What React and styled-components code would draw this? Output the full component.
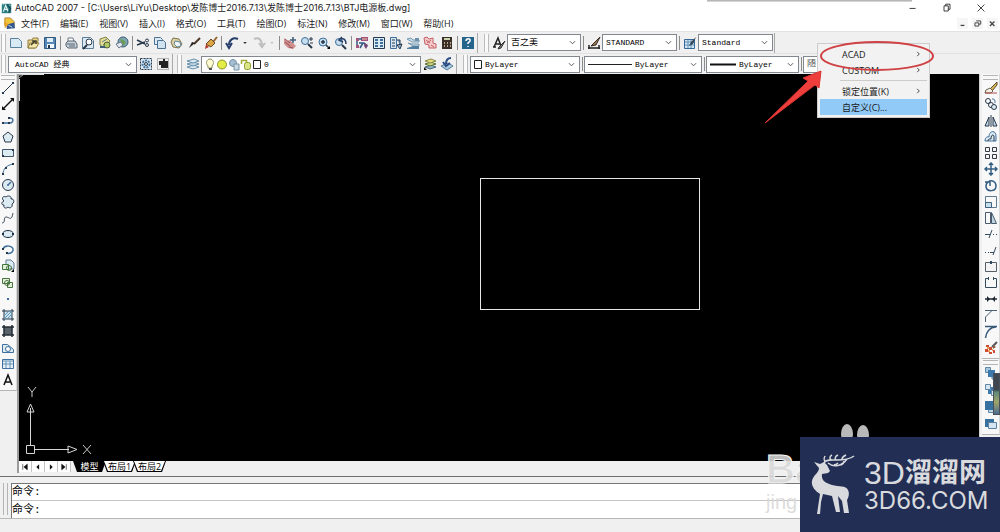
import React, { useState } from "react";
import styled, { createGlobalStyle } from "styled-components";

const GlobalStyle = createGlobalStyle`
  * {
    box-sizing: border-box;
  }
  body {
    margin: 0;
    background: #f0f0f0;
    font-family: "Open Sans", "Noto Sans CJK SC", sans-serif;
    font-size: 9px;
    color: #1a1a1a;
  }
  button,
  input,
  select {
    font: inherit;
    color: inherit;
    margin: 0;
    padding: 0;
    border: none;
    background: none;
  }
`;

const Window = styled.div`
  position: relative;
  display: flex;
  flex-direction: column;
  min-height: 100vh;
  overflow: hidden;
`;

const TitleBar = styled.header`
  display: flex;
  align-items: center;
  height: 16px;
  padding: 0 12px 0 1px;
  background: #fff;
`;

const Title = styled.h1`
  flex: 1;
  margin: 0 0 0 3px;
  font-family: Inter, "Noto Sans CJK SC", sans-serif;
  font-size: 9px;
  font-weight: 400;
  line-height: 16px;
  white-space: nowrap;
`;

const WindowButtons = styled.div`
  display: flex;
  gap: ${(props) => (props.small ? "4px" : "20px")};
`;

const WindowButton = styled.button`
  display: flex;
  align-items: center;
  justify-content: center;
  width: ${(props) => (props.small ? "11px" : "14px")};
  height: ${(props) => (props.small ? "11px" : "14px")};
  background: ${(props) => (props.small ? "#f6f6f6" : "none")};
`;

const MenuBar = styled.nav`
  display: flex;
  align-items: center;
  height: 15px;
  padding: 0 2px 0 3px;
  background: #fff;
`;

const Menus = styled.div`
  display: flex;
  flex: 1;
  gap: 11px;
  margin-left: 5px;
`;

const MenuButton = styled.button`
  line-height: 15px;
  white-space: nowrap;
`;

const ToolRow = styled.div`
  display: flex;
  align-items: center;
  height: ${(props) => props.height};
  border-top: 1px solid #e2e2e2;
`;

const Toolbar = styled.div`
  display: flex;
  align-items: center;
  height: 20px;
  padding-right: 1px;
  margin-right: ${(props) => props.after || "5px"};
  border-right: 1px solid #a8a8a8;
`;

const Grip = styled.div`
  width: 5px;
  height: 18px;
  margin: 0 ${(props) => props.gap || "2px"} 0 1px;
  border: solid #bcbcbc;
  border-width: 0 1px;
  background: #fafafa;
`;

const ToolButton = styled.button`
  display: flex;
  align-items: center;
  justify-content: center;
  width: ${(props) => (props.narrow ? "10px" : "17px")};
  height: ${(props) => (props.side ? "16px" : "18px")};
  flex: none;
`;

const Divider = styled.span`
  width: 4px;
  height: 14px;
  flex: none;
  background: linear-gradient(#8c8c8c, #8c8c8c) center / 1px 100% no-repeat;
`;

const ComboBox = styled.label`
  position: relative;
  display: flex;
  align-items: center;
  gap: 3px;
  width: ${(props) => props.width};
  height: 17px;
  padding: 0 3px;
  flex: none;
  background: #fff;
  border: 1px solid #828790;
`;

const ComboSelect = styled.select`
  flex: 1;
  min-width: 0;
  height: 15px;
  appearance: none;
  outline: none;
  font-family: "Liberation Mono", "Noto Sans CJK SC", monospace;
  font-size: ${(props) => (props.large ? "9px" : "8px")};
  color: #000;
  text-indent: ${(props) => props.indent || "0"};
`;

const Main = styled.main`
  display: flex;
  flex: 1;
`;

const SideDock = styled.aside`
  width: ${(props) => (props.right ? "21px" : "19px")};
  flex: none;
  padding-left: ${(props) => (props.right ? "2px" : "0")};
  border-left: ${(props) => (props.right ? "1px solid #d0d0d0" : "none")};
  border-right: ${(props) => (props.right ? "none" : "2px solid #9a9a9a")};
`;

const SideBar = styled.div`
  display: flex;
  flex-direction: column;
  height: ${(props) => props.height};
  background: #f8f8f9;
  border-bottom: 1px solid #b4b4b4;
  border-right: 1px solid #d8d8d8;
`;

const SideGrip = styled.div`
  height: 5px;
  flex: none;
  margin: 1px 1px 0;
  border: solid #b4b4b4;
  border-width: 1px 0;
`;

const SideTools = styled.div`
  display: flex;
  flex: 1;
  flex-direction: column;
  align-items: center;
  justify-content: space-between;
  padding-bottom: 2px;
`;

const Workspace = styled.section`
  display: flex;
  flex: 1;
  flex-direction: column;
  min-width: 0;
`;

const Drawing = styled.svg`
  display: block;
  flex: 1;
  width: 100%;
  min-height: 380px;
  background: #000;
`;

const TabRow = styled.div`
  display: flex;
  height: 12px;
`;

const TabNav = styled.button`
  display: flex;
  align-items: center;
  justify-content: center;
  width: 13px;
  height: 11px;
  background: #fdfdfd;
  border-right: 1px solid #c4c4c4;
`;

const Tabs = styled.div`
  display: flex;
  margin-left: 2px;
`;

const LayoutTab = styled.button`
  position: relative;
  width: 33px;
  height: 11px;
  margin-right: -3px;
  font-size: 9px;
  line-height: 11px;
  white-space: nowrap;
  color: ${(props) => (props.active ? "#fff" : "#000")};
  z-index: 0;

  &::before,
  &::after {
    content: "";
    position: absolute;
    z-index: -1;
    inset: 0;
    background: #000;
    clip-path: polygon(0 0, 100% 0, calc(100% - 4px) 100%, 4px 100%);
  }
  &::after {
    inset: 0 1px 1px;
    background: ${(props) => (props.active ? "#000" : "#fff")};
  }
`;

const CommandDock = styled.section`
  display: flex;
  margin-top: 3px;
  padding-top: 6px;
  border-top: 1px solid #6e6e6e;
  border-bottom: 1px solid #b8b8b8;
`;

const CommandGrip = styled.div`
  width: 5px;
  margin: 0 3px 3px;
  border: solid #b4b4b4;
  border-width: 0 1px;
`;

const CommandPane = styled.div`
  flex: 1;
  border: solid #777;
  border-width: 1px 0 0 1px;
  background: #fff;
  font-family: "Liberation Mono", "Noto Sans CJK SC", monospace;
  font-size: 11px;
  color: #000;
`;

const CommandLine = styled.div`
  display: flex;
  align-items: center;
  height: 17px;
  line-height: 12px;
  border-bottom: ${(props) => (props.divided ? "1px solid #c4c4c4" : "none")};
`;

const CommandInput = styled.input`
  flex: 1;
  outline: none;
`;

const StatusBar = styled.footer`
  height: 13px;
`;

const ContextMenu = styled.div`
  position: absolute;
  left: 817px;
  top: 43px;
  width: 113px;
  padding: 2px;
  background: #f2f2f2;
  border: 1px solid #ccc;
`;

const ContextItem = styled.button`
  display: flex;
  align-items: center;
  justify-content: space-between;
  width: 100%;
  height: 16px;
  padding: 0 6px 0 22px;
  background: ${(props) => (props.selected ? "#91c9f7" : "transparent")};
`;

const ContextRule = styled.hr`
  height: 1px;
  margin: 2px 0 2px 20px;
  border: none;
  background: #ccc;
`;

const Annotation = styled.svg`
  position: absolute;
  left: 760px;
  top: 36px;
  pointer-events: none;
`;

const BackWindowEdge = styled.div`
  position: absolute;
  left: 707px;
  top: 0;
  width: 205px;
  height: 2px;
  background: linear-gradient(#a8a8a8, #e4e4e4);
`;

const FloatingMeter = styled.div`
  position: absolute;
  right: 0;
  top: 373px;
  width: 7px;
  height: 42px;
  background: linear-gradient(#3e4650 40%, #5c8a78 45%, #a0a468 70%, #4d6d92);
  border: 1px solid #4a505a;
`;

const Watermark = styled.div`
  position: absolute;
  right: 180px;
  bottom: 18px;
  width: 54px;
  font-family: "Liberation Sans", sans-serif;
  color: rgba(216, 216, 216, 0.9);
`;

const WatermarkName = styled.div`
  font-size: 40px;
  font-weight: 700;
  line-height: 42px;
  -webkit-text-stroke: 1px #f4f4f4;
`;

const WatermarkSub = styled.div`
  font-size: 20px;
  line-height: 24px;
`;

const Paw = styled.svg`
  position: absolute;
  right: 128px;
  bottom: 90px;
`;

const Brand = styled.div`
  position: absolute;
  right: 0;
  bottom: 0;
  display: flex;
  align-items: center;
  gap: 7px;
  width: 200px;
  height: 95px;
  padding: 0 0 0 11px;
  background: #222e54;
  color: #d9dadd;
`;

const BrandName = styled.div`
  display: flex;
  align-items: center;
  height: 32px;
  font-family: Inter, "Noto Sans CJK SC", sans-serif;
  font-size: 27px;
  font-weight: 700;
  line-height: 32px;
  white-space: nowrap;
`;

const BrandPrefix = styled.span`
  font-family: "Liberation Sans", sans-serif;
  font-size: 32px;
  font-weight: 400;
`;

const BrandSite = styled.div`
  height: 24px;
  font-family: Inter, sans-serif;
  font-size: 24px;
  line-height: 24px;
`;

const ink = "#27384a";
const blue = "#3f6f9c";
const pale = "#c6deed";

const glyphs = {
  app: (
    <>
      <path d="M1 1h12v12H1z" fill="#2e7f84" />
      <path d="M3 11L6 3l3 8M5 8h4" stroke="#e5f5f2" strokeWidth="1.5" />
      <path d="M8 2l4 5-2 5" stroke="#134d55" strokeWidth="2" />
      <path d="M10 3h2M2 2h2" stroke="#b8d9d2" />
    </>
  ),
  doc: (
    <>
      <path d="M2 1h6l4 4v4H2z" fill="#f2c43c" stroke="#af842a" />
      <path d="M4 8l8-2 1 6-9 1z" fill="#31568d" />
      <path d="M1 4l5 4-4 4" fill="#e2a32b" />
      <path d="M6 9l4 2" stroke="#d9e5f2" />
    </>
  ),
  newFile: <path d="M1.500 2.500h8l3 3v6h-11z" fill="#d8ebf5" stroke="#58819c" />,
  open: (
    <>
      <path d="M2 4h4l1-2h5v3L9 12H2z" fill="#e8d68f" stroke="#8f7d3a" />
      <path d="M4 7h9l-3 5H2z" fill="#f5e7ab" stroke="#8f7d3a" />
      <path d="M5 9l4-4M6 5h4v3" stroke="#42402c" strokeWidth="1.500" />
    </>
  ),
  save: (
    <>
      <path d="M1.500 1.500h11v11h-11z" fill="#5588b8" stroke="#31587f" />
      <path d="M4 2h6v4H4z" fill="#e1edf5" />
      <path d="M4 8h7v4H4z" fill="#f4f8fa" />
      <path d="M6 9v3" stroke={ink} strokeWidth="2" />
    </>
  ),
  print: (
    <>
      <path d="M4 6V2h5l1 4" fill="#fff" stroke="#6b7785" />
      <path d="M2 7l2-2h7l2 3v4H4l-2-2z" fill="#c9d1db" stroke="#566474" />
      <path d="M3 8h8M5 10h6" stroke="#566474" />
    </>
  ),
  preview: (
    <>
      <path d="M1.500 1.500h8l3 3v8h-11z" fill="#dcebf3" stroke="#5d7e97" />
      <circle cx="8" cy="6" r="3" fill="#fff" stroke={ink} />
      <path d="M6 9l-4 4" stroke={ink} strokeWidth="2" />
    </>
  ),
  publish: (
    <>
      <path d="M2 3l6-2 4 4-5 7-5-3z" fill="#e7df99" stroke="#7f823e" />
      <path d="M4 6l5-3M5 9l5-3" stroke="#617687" />
      <circle cx="9" cy="9" r="3" fill="#b5c968" stroke="#4c6235" />
      <path d="M2 11h5" stroke="#3f5e7c" strokeWidth="2" />
    </>
  ),
  globe: (
    <>
      <circle cx="8" cy="6" r="5" fill="#7fa7b6" stroke="#3c5b72" />
      <path d="M5 3l4 1 2 3-3 3" fill="#6c9c56" />
      <path d="M1 8l5-2 2 3-4 3z" fill="#e4eaf0" stroke="#647487" />
    </>
  ),
  cut: (
    <>
      <path d="M1 4l8 4M1 9l8-3" stroke={ink} strokeWidth="1.500" />
      <circle cx="11" cy="4.500" r="1.500" stroke={ink} />
      <circle cx="11" cy="9" r="1.500" stroke={ink} />
    </>
  ),
  copy: (
    <>
      <path d="M1.500 1.500h6l2 2v5h-8z" fill="#dbeaf4" stroke="#4c7290" />
      <path d="M4.500 4.500h6l2 2v6h-8z" fill="#cee2ef" stroke="#4c7290" />
    </>
  ),
  paste: (
    <>
      <path d="M3 2l6 1 3 5-3 4-6-1-2-5z" fill="#ded3a0" stroke="#7a7454" />
      <path d="M5 5l5 1 1 4-4 1-3-3z" fill="#f0f5f8" stroke="#64879b" />
    </>
  ),
  brush: (
    <>
      <path d="M13 2L7 8" stroke="#4c3728" strokeWidth="2" />
      <path d="M8 7l-6 5 3-6z" fill="#29211e" />
    </>
  ),
  match: (
    <>
      <path d="M13 1L9 6" stroke="#96652e" strokeWidth="2" />
      <path d="M7 3l4 4-4 4-5-3z" fill="#dba445" stroke="#6b4929" />
      <path d="M2 8l3 3-4 2z" fill="#b33d2d" />
    </>
  ),
  undo: <path d="M13 3C8 1 4 4 4 9M1 7l3 5 3-5" stroke="#263d6c" strokeWidth="2" />,
  redo: <path d="M2 3c5-2 8 1 8 6M7 7l3 4 3-4" stroke="#bdbdbd" strokeWidth="2" />,
  down: <path d="M4.500 5.500h5l-2.500 3z" fill="#333" />,
  downPale: <path d="M5 6h4l-2 2z" fill="#aaa" />,
  pan: (
    <>
      <path d="M1 2l3 3 2-1 3 2 4 4-3 3-5-1-4-4z" fill="#d28f8d" />
      <path d="M2 3l5 4M2 6l5 4M6 11l4 1" stroke="#8f5258" />
      <path d="M10 1v6M7 4h6" stroke={ink} />
      <path d="M9 2h2M9 6h2M8 3v2M12 3v2" stroke={blue} />
    </>
  ),
  zoom: (
    <>
      <circle cx="5" cy="5" r="3.500" fill={pale} stroke={blue} />
      <path d="M8 8l4 4" stroke={ink} strokeWidth="2" />
      <path d="M11 1v4M9 3h4M10 7h3" stroke={ink} />
    </>
  ),
  zoomWindow: (
    <>
      <circle cx="6" cy="6" r="4" fill={pale} stroke={blue} />
      <path d="M9 9l3 3M4 6h4M6 4v4" stroke={ink} strokeWidth="1.500" />
      <path d="M13 10v3h-3z" fill="#000" />
    </>
  ),
  zoomPrev: (
    <>
      <circle cx="5" cy="6" r="3.500" fill={pale} stroke={blue} />
      <path d="M8 9l4 4" stroke={ink} strokeWidth="2" />
      <path d="M12 8c0-4-2-6-5-5M8 1L5 4l4 2" stroke="#253f69" strokeWidth="1.500" />
    </>
  ),
  properties: (
    <>
      <path d="M1 2h3v3H1zM1 9h3v3H1zM6 1h7v4H6z" fill="#a5557d" />
      <path d="M2 5v4M4 3h3M4 7h5l3 4M5 12l3-5" stroke="#345985" strokeWidth="1.500" />
      <path d="M7 3h5" stroke="#ebc3a2" />
      <path d="M10 7l3 2-2 4-2-3z" fill="#754773" />
    </>
  ),
  design: (
    <>
      <path d="M1.500 1.500h11v11h-11z" fill="#dcecf4" stroke={ink} />
      <path d="M3 4h3M8 4h3M3 7h3M8 7h3M3 10h3M8 10h3" stroke={blue} strokeWidth="2" />
    </>
  ),
  palette: (
    <>
      <path d="M1.500 1.500h6v11h-6z" fill="#d6e6f1" stroke={blue} />
      <path d="M3 4h3M3 7h3M3 10h3" stroke={ink} />
      <path d="M8 4h3v5M8 9l3 4 2-5z" fill="#8ab2ce" stroke={ink} />
    </>
  ),
  sheets: (
    <>
      <path d="M1 3l4-1 2 2h6v2H6zM2 7l4 1h7v2H7z" fill="#c7dce9" stroke="#789bb2" />
      <path d="M1 12l6-2h6v3H1z" fill="#537e9f" />
      <path d="M9 2h4v3H9z" fill="#6e92ac" />
    </>
  ),
  markup: (
    <>
      <path d="M1 2l3-1 2 2 4-1v5l3 1v4H6V9L2 8z" fill="#f5caca" stroke="#c45e66" />
      <path d="M3 4l4 3M4 7l4-3M8 9l3 2" stroke="#c45e66" />
    </>
  ),
  calc: (
    <>
      <path d="M2 1h10v12H2z" fill="#3a3027" />
      <path d="M4 3h6" stroke="#c8d4aa" strokeWidth="2" />
      <path d="M4 7h1M7 7h1M10 7h1M4 10h1M7 10h1M10 10h1" stroke="#e9cfac" strokeWidth="1.500" />
    </>
  ),
  help: (
    <>
      <path d="M1 1h12v12H1z" fill="#25648b" />
      <path d="M5 5c0-3 5-3 4 0L7 7v1M7 10v1" stroke="#fff" strokeWidth="1.500" />
    </>
  ),
  gear: (
    <>
      <path d="M1.500 1.500h11v11h-11z" fill="#d9e8f2" stroke={ink} strokeDasharray="2 1" />
      <circle cx="7" cy="7" r="3.500" stroke={blue} strokeWidth="2" strokeDasharray="2 1" />
      <circle cx="7" cy="7" r="1.500" stroke={ink} />
    </>
  ),
  workspace: (
    <>
      <path d="M1.500 1.500h11v11h-11z" fill="#eee" stroke="#777" strokeDasharray="1 1" />
      <path d="M3 4h4V2h2v2h3v7H5V8H3z" fill="#222" />
    </>
  ),
  layers: (
    <>
      <path d="M1 10l7-2 5 2-6 2z" fill="#dcebf3" stroke="#6c91ac" />
      <path d="M1 7l7-2 5 2-6 2z" fill="#bdd7e7" stroke="#6c91ac" />
      <path d="M1 4l7-2 5 2-6 2z" fill="#dcebf3" stroke="#6c91ac" />
    </>
  ),
  layerStates: (
    <>
      <path d="M2 10l6-2 5 2-6 2z" fill="#8fb1c4" stroke="#48697e" />
      <path d="M2 7l6-2 5 2-6 2z" fill="#c7d184" stroke="#5d7134" />
      <path d="M2 4l6-2 5 2-6 2z" fill="#e7df7e" stroke="#8b8c46" />
      <path d="M1 10v3h3z" fill="#111" />
    </>
  ),
  layerBack: (
    <>
      <path d="M1 9l7-3 5 3-6 4z" fill="#a8cbe2" stroke="#587a96" />
      <path d="M11 1C7 1 6 3 6 7M3 5l3 4 4-3" stroke="#294c83" strokeWidth="2" />
    </>
  ),
  textStyle: (
    <>
      <path d="M2 11L6 2l3 8M3 8h5M1 11h3" stroke="#222" strokeWidth="1.500" />
      <path d="M13 5l-6 6-1 2 3-1z" fill="#777" stroke="#333" />
    </>
  ),
  dimStyle: (
    <>
      <path d="M1 12h12M2 9v4M12 9v4" stroke="#222" strokeWidth="1.500" />
      <path d="M13 1L7 7l-3 3 5-1z" fill="#9b7d5b" stroke="#37291e" />
    </>
  ),
  tableStyle: (
    <>
      <path d="M1.500 3.500h10v9h-10z" fill="#d3e7f5" stroke="#356999" />
      <path d="M2 6h9M2 9h9M5 4v8M8 4v8" stroke="#6391b8" />
      <path d="M13 1L8 6l-2 4 4-2z" fill="#374554" />
    </>
  ),
  line: (
    <>
      <path d="M2 12L12 2" stroke={ink} />
      <path d="M1 11h2v2H1zM11 1h2v2h-2z" fill={ink} />
    </>
  ),
  xline: (
    <>
      <path d="M2 12L12 2" stroke="#111" strokeWidth="1.500" />
      <path d="M1 13v-4l4 4zM13 1v4L9 1z" fill="#111" />
    </>
  ),
  polyline: (
    <>
      <path d="M2 10h7c4 0 4-6-1-5" stroke={blue} strokeWidth="1.500" />
      <path d="M1 9h2v2H1zM7 9h2v2H7zM7 4h2v2H7z" fill={ink} />
    </>
  ),
  polygon: <path d="M7 2l5 4-2 6H4L2 6z" fill="#dceaf2" stroke={ink} />,
  rectangle: (
    <>
      <path d="M1.500 3.500h11v7h-11z" fill="#dceaf2" stroke="#44586d" />
      <path d="M1 9h2v2H1zM11 3h2v2h-2z" fill={ink} />
    </>
  ),
  arc: (
    <>
      <path d="M2 12c0-5 4-9 10-10" stroke={blue} />
      <path d="M1 11h2v2H1zM4 5h2v2H4zM11 1h2v2h-2z" fill={ink} />
    </>
  ),
  circle: (
    <>
      <circle cx="7" cy="7" r="5.500" fill="#dceaf2" stroke={ink} />
      <path d="M7 7l3-3M6 7h2" stroke={blue} strokeWidth="1.500" />
    </>
  ),
  cloud: (
    <path
      d="M3 6C0 4 2 0 5 2c2-2 6-1 5 2 3-1 4 4 1 5 1 3-2 5-4 3-2 2-5 1-4-2-3 0-3-3 0-4z"
      fill="#dceaf2"
      stroke={ink}
    />
  ),
  spline: <path d="M1 12c4 0 1-6 4-6s4 3 6 0l1-4" stroke="#485561" />,
  ellipse: (
    <>
      <ellipse cx="7" cy="7" rx="5.500" ry="3.500" fill="#dceaf2" stroke={ink} />
      <path d="M1 6h2v2H1zM11 6h2v2h-2zM6 3h2v1H6zM6 10h2v1H6z" fill="#17334d" />
    </>
  ),
  ellipseArc: (
    <>
      <path d="M2 6c2-5 11-3 10 1 0 3-4 4-6 3" stroke={blue} strokeWidth="1.500" />
      <path d="M1 5h2v2H1zM5 9h2v2H5z" fill={ink} />
    </>
  ),
  insert: (
    <>
      <path d="M5 1h5l3 3v6H5z" fill="#dceaf2" stroke="#5e7d94" />
      <path d="M1.500 5.500h6v5h-6z" fill="#e5f0dc" stroke="#3e7538" />
      <circle cx="8" cy="9" r="2.500" stroke="#3e7538" />
      <path d="M13 10v3h-3z" fill="#000" />
    </>
  ),
  block: (
    <>
      <path d="M1.500 2.500h7v5h-7zM6.500 6.500h5v5h-5z" fill="#e5f0dc" stroke="#47733f" />
      <circle cx="6" cy="7" r="2.500" stroke="#47733f" />
    </>
  ),
  point: <path d="M6 6h2v2H6z" fill="#356b9d" />,
  hatch: (
    <>
      <path d="M3 3h8v8H3z" fill="#cce3ee" />
      <path d="M1 3h12M1 11h12M3 1v12M11 1v12" stroke={ink} />
      <path d="M3 8l5-5M3 11l8-8M6 11l5-5" stroke="#5e9abd" />
    </>
  ),
  gradient: (
    <>
      <path d="M3 3h8v8H3z" fill="#59616b" />
      <path d="M1 3h12M1 11h12M3 1v12M11 1v12" stroke="#252c34" strokeWidth="1.500" />
    </>
  ),
  region: (
    <>
      <path d="M1.500 11.500v-8h5l6 5v3z" fill="#dceaf2" stroke={blue} />
      <circle cx="7" cy="8" r="2.500" fill="#fff" stroke={blue} />
    </>
  ),
  table: (
    <>
      <path d="M1.500 2.500h11v9h-11z" fill="#e5f0f7" stroke={blue} />
      <path d="M2 4h10M2 7h10M5 4v7M9 4v7" stroke="#6592b3" />
    </>
  ),
  text: <path d="M3 12L7 2l4 10M4 9h6" stroke="#111" strokeWidth="1.500" />,
  erase: (
    <>
      <path d="M13 1L6 8l2 2 5-6z" fill="#d7b65c" stroke="#5c4b2c" />
      <path d="M2 9l4-2 3 3-2 2H1z" fill="#f4f0e3" stroke="#665e4d" />
      <path d="M1 12h12" stroke="#b44b50" />
    </>
  ),
  copyObject: (
    <>
      <circle cx="4" cy="4" r="2.500" stroke={ink} />
      <circle cx="7" cy="8" r="2.500" stroke={ink} />
      <circle cx="10" cy="10" r="2.500" fill="#dceaf2" stroke={ink} />
      <path d="M8 2c3 0 3 1 3 4" stroke={blue} />
    </>
  ),
  mirror: (
    <>
      <path d="M5 3v9H1zM9 3v9h4z" fill="#bed5e4" stroke={ink} />
      <path d="M7 1v12" stroke={ink} />
    </>
  ),
  offset: (
    <>
      <path d="M1 11c0-3 2-5 4-4 0-7 7-7 7-1v5z" fill="#dceaf2" stroke={blue} />
      <path d="M4 11c0-2 1-2 3-2 0-4 2-5 3-3v5" stroke={ink} />
    </>
  ),
  array: <path d="M1.500 1.500h4v4h-4zM8.500 1.500h4v4h-4zM1.500 8.500h4v4h-4zM8.500 8.500h4v4h-4z" fill="#f5f5f5" stroke="#343b42" />,
  move: <path d="M7 2v10M2 7h10M5 3l2-2 2 2M5 11l2 2 2-2M3 5L1 7l2 2M11 5l2 2-2 2" stroke="#345e83" strokeWidth="1.500" />,
  rotate: <path d="M4 3c4-3 8 0 8 4 0 6-9 6-10 1 0-2 0-4 2-5M1 3h5v4" stroke="#345e83" strokeWidth="1.500" />,
  scale: (
    <>
      <path d="M1.500 1.500h11v11h-11z" stroke="#5f7b91" />
      <path d="M1.500 7.500h6v5h-6z" fill="#c8deeb" stroke="#3e617d" />
    </>
  ),
  stretch: (
    <>
      <path d="M1.500 1.500h5v11h-5z" fill="#f6f8f9" stroke="#495b6b" />
      <path d="M7.500 1.500v11h5z" fill="#bed5e4" stroke="#495b6b" />
    </>
  ),
  trim: <path d="M1 7.500h5M5 11l3-8M9 7.500h1M12 7.500h1" stroke="#344b60" />,
  extend: <path d="M1 8.500h1M4 8.500h1M6 8.500h4M9 11l3-8" stroke="#344b60" />,
  breakPoint: (
    <>
      <path d="M1.500 2.500h11v9h-11z" fill="#f4f4f4" stroke="#565e68" />
      <path d="M6 1h2v3H6z" fill="#344b60" />
    </>
  ),
  breakLine: <path d="M5 2.500H1.500v9h11v-9H9M4.500 1v3M9.500 1v3" stroke="#344b60" />,
  join: (
    <>
      <path d="M1 7h12" stroke="#1f2830" strokeWidth="1.500" />
      <path d="M3 4l3 3-3 3zM11 4L8 7l3 3z" fill="#1f2830" />
    </>
  ),
  chamfer: <path d="M1 1.500h12M1.500 13V8l6-6" stroke="#475e73" />,
  fillet: <path d="M1 1.500h12M1.500 13C2 7 6 2 12 2" stroke="#365977" strokeWidth="1.500" />,
  explode: (
    <>
      <path d="M13 1L8 6" stroke="#575757" strokeWidth="2" />
      <path d="M9 4l3 2-3 2z" fill="#8b5b42" />
      <path d="M2 4h3v2H2zM1 8h3v3H1zM5 6h3v3H5zM5 11h3v2H5zM9 9h2v3H9z" fill="#ce4b34" />
      <path d="M3 6h2v2H3zM4 9h2v2H4zM8 8h1v2H8z" fill="#e9a258" />
    </>
  ),
  front: (
    <>
      <path d="M1.500 1.500h5v5h-5zM8 8h5v5H8z" fill="#a6c8de" stroke="#6087a5" />
      <path d="M4 4h7v7H4z" fill="#3d78ac" />
    </>
  ),
  back: (
    <>
      <path d="M4 4h7v7H4z" fill="#3d78ac" />
      <path d="M1.500 1.500h5v5h-5zM7.500 7.500h5v5h-5z" fill="#d5e6f1" stroke="#6087a5" />
    </>
  ),
  above: (
    <>
      <path d="M4.500 7.500h8v5h-8z" fill="#bed5e4" stroke="#6087a5" />
      <path d="M1 1h10v9H1z" fill="#36719f" />
    </>
  ),
  below: (
    <>
      <path d="M1 2h9v8H1z" fill="#36719f" />
      <path d="M4.500 5.500h8v6h-8z" fill="#d5e6f1" stroke="#5b82a2" />
    </>
  ),
  minimize: <path d="M3 7.500h7" stroke="#222" />,
  restore: <path d="M3.500 4.500h5v6h-5zM5.500 4.500v-2h5v6h-2" stroke="#222" />,
  close: <path d="M3 3l8 8M11 3l-8 8" stroke="#222" />,
  minimizeDoc: <path d="M4 10h6" stroke="#444" strokeWidth="2" />,
  restoreDoc: <path d="M3 6h6v5H3zM5 3h7v5h-3" stroke="#444" strokeWidth="1.500" />,
  closeDoc: <path d="M3 4l7 7M10 4l-7 7" stroke="#444" strokeWidth="2" />,
  first: <path d="M3 2v10M11 2v10L5 7z" fill="#111" stroke="#111" />,
  prev: <path d="M9 2v10L4 7z" fill="#111" />,
  next: <path d="M5 2v10l5-5z" fill="#111" />,
  last: <path d="M11 2v10M3 2v10l6-5z" fill="#111" stroke="#111" />,
  chevron: <path d="M3 5l4 4 4-4" stroke="#555" strokeWidth="1.500" />,
  chevronRight: <path d="M5 2l5 5-5 5" stroke="#333" strokeWidth="2" />,
};

function Icon({ name, size = 14 }) {
  return (
    <svg width={size} height={size} viewBox="0 0 14 14" fill="none" aria-hidden="true">
      {glyphs[name]}
    </svg>
  );
}

function Tools({ names, side }) {
  return names.map((name, i) =>
    name === "|" ? (
      <Divider key={i} />
    ) : (
      <ToolButton
        key={name}
        aria-label={name}
        side={side ? 1 : undefined}
        narrow={name.startsWith("down") ? 1 : undefined}
      >
        <Icon name={name} />
      </ToolButton>
    )
  );
}

function Combo({ label, value, width, large, indent, children }) {
  return (
    <ComboBox width={width}>
      {children}
      <ComboSelect aria-label={label} large={large ? 1 : undefined} indent={indent} defaultValue={value}>
        <option>{value}</option>
      </ComboSelect>
      <Icon name="chevron" size={9} />
    </ComboBox>
  );
}

const menus = [
  "文件(F)",
  "编辑(E)",
  "视图(V)",
  "插入(I)",
  "格式(O)",
  "工具(T)",
  "绘图(D)",
  "标注(N)",
  "修改(M)",
  "窗口(W)",
  "帮助(H)",
];

const standardTools = [
  "newFile", "open", "save", "|", "print", "preview", "publish", "globe", "|",
  "cut", "copy", "paste", "brush", "match", "|", "undo", "down", "redo", "downPale", "|",
  "pan", "zoom", "zoomWindow", "zoomPrev", "|",
  "properties", "design", "palette", "sheets", "markup", "calc", "|", "help",
];

const drawTools = [
  "line", "xline", "polyline", "polygon", "rectangle", "arc", "circle", "cloud", "spline",
  "ellipse", "ellipseArc", "insert", "block", "point", "hatch", "gradient", "region", "table", "text",
];

const modifyTools = [
  "erase", "copyObject", "mirror", "offset", "array", "move", "rotate", "scale", "stretch",
  "trim", "extend", "breakPoint", "breakLine", "join", "chamfer", "fillet", "explode",
];

const orderTools = ["front", "back", "above", "below"];

function LayerMarks() {
  return (
    <svg width="56" height="13" viewBox="0 0 56 13" fill="none" aria-hidden="true">
      <path d="M3 8C0 5 2 1 5 1s5 4 2 7v2H3z" fill="#fffbd2" stroke="#92905f" />
      <path d="M4 11h3" stroke="#555" strokeWidth="2" />
      <circle cx="17" cy="6.500" r="4.500" fill="#e3ed45" stroke="#8c952c" />
      <circle cx="28" cy="5" r="3.500" fill="#a6bfd2" stroke="#7691a6" />
      <path d="M29 6h5v6h-5z" fill="#c9dae5" stroke="#7691a6" />
      <path d="M36.500 6V2.500h5V6" stroke="#a1ad37" strokeWidth="1.500" />
      <rect x="39.500" y="4.500" width="6" height="7" rx="2" fill="#dbe484" stroke="#8f9e31" />
      <path d="M48.500 2.500h7v8h-7z" fill="#fff" stroke="#222" />
    </svg>
  );
}

function Deer() {
  return (
    <svg width="46" height="61" viewBox="0 0 46 61" fill="none" aria-hidden="true">
      <path
        d="M3 8l6 2 4-2 3 3 3 6-2 2-6 1c-1 7 4 9 10 11 7 2 14 0 16 5 2 4 0 8-1 10l2 13h-5l-2-12-4-5 2 16h-4l-4-16-9-2-2 8-1 12H6l3-20C4 37 0 32 1 27c1-6 7-8 7-13z"
        fill="#d9dadd"
      />
      <path
        d="M13 9c1-4 7-3 13-3 8 0 13-1 17-4M15 8c-3-2-2-4-1-6M20 6c-2-2-1-4 1-5M25 6c-2-2 0-4 2-5M31 5c0-2 2-3 4-4M17 9c6 5 14 3 19-4M23 11c2 0 3-1 4-2M30 11c2-1 3-2 3-4"
        stroke="#d9dadd"
        strokeWidth="1.500"
      />
    </svg>
  );
}

export default function App() {
  const [tab, setTab] = useState("模型");

  return (
    <Window>
      <GlobalStyle />
      <TitleBar>
        <Icon name="app" size={11} />
        <Title>AutoCAD 2007 - [C:\Users\LiYu\Desktop\发陈博士2016.7.13\发陈博士2016.7.13\BTJ电源板.dwg]</Title>
        <WindowButtons>
          {["minimize", "restore", "close"].map((name) => (
            <WindowButton key={name} aria-label={name}>
              <Icon name={name} size={12} />
            </WindowButton>
          ))}
        </WindowButtons>
      </TitleBar>
      <MenuBar>
        <Icon name="doc" size={13} />
        <Menus>
          {menus.map((menu) => (
            <MenuButton key={menu}>{menu}</MenuButton>
          ))}
        </Menus>
        <WindowButtons small={1}>
          {["minimizeDoc", "restoreDoc", "closeDoc"].map((name) => (
            <WindowButton key={name} aria-label={name} small={1}>
              <Icon name={name} size={9} />
            </WindowButton>
          ))}
        </WindowButtons>
      </MenuBar>

      <ToolRow height="22px">
        <Toolbar>
          <Grip gap="1px" />
          <Tools names={standardTools} />
        </Toolbar>
        <Toolbar>
          <Grip gap="1px" />
          <Tools names={["textStyle"]} />
          <Combo label="Text style" value="吉之美" width="74px" large />
          <Divider />
          <Tools names={["dimStyle"]} />
          <Combo label="Dimension style" value="STANDARD" width="75px" />
          <Divider />
          <Tools names={["tableStyle"]} />
          <Combo label="Table style" value="Standard" width="75px" />
        </Toolbar>
      </ToolRow>
      <ToolRow height="21px">
        <Toolbar after="3px">
          <Grip />
          <Combo label="Workspace" value="AutoCAD 经典" width="129px" indent="3px" />
          <Tools names={["gear", "workspace"]} />
        </Toolbar>
        <Toolbar>
          <Grip />
          <Tools names={["layers"]} />
          <Combo label="Layer" value="0" width="220px">
            <LayerMarks />
          </Combo>
          <Tools names={["layerStates", "layerBack"]} />
        </Toolbar>
        <Toolbar>
          <Grip />
          <Combo label="Color" value="ByLayer" width="110px">
            <svg width="8" height="9" aria-hidden="true">
              <path d="M.5.5h7v8h-7z" fill="#fff" stroke="#222" />
            </svg>
          </Combo>
          <Divider />
          <Combo label="Linetype" value="ByLayer" width="118px">
            <svg width="44" height="3" aria-hidden="true">
              <path d="M0 1.500h44" stroke="#222" />
            </svg>
          </Combo>
          <Divider />
          <Combo label="Lineweight" value="ByLayer" width="93px">
            <svg width="26" height="3" aria-hidden="true">
              <path d="M0 1.500h26" stroke="#111" strokeWidth="2" />
            </svg>
          </Combo>
          <Divider />
          <ComboBox as="span" width="48px">
            <ComboSelect aria-label="Plot style" disabled large={1} defaultValue="随">
              <option>随</option>
            </ComboSelect>
          </ComboBox>
        </Toolbar>
      </ToolRow>

      <Main>
        <SideDock>
          <SideBar height="317px">
            <SideGrip />
            <SideTools>
              <Tools names={drawTools} side />
            </SideTools>
          </SideBar>
        </SideDock>
        <Workspace>
          <Drawing role="img" aria-label="Model space" fill="none">
            <path d="M0 .5h25M.5 5v22" stroke="#ddd" />
            <path d="M0 4l4-3M0 1h3" stroke="#999" />
            <rect x="461.500" y="104.500" width="219" height="131" stroke="#e6e6e6" />
            <path d="M11.500 371.500V334M15.500 375.500H50M7.500 371.500h8v8h-8zM8 338l3.500-8 3.500 8zM49 372l9 3.500-9 3.500z" stroke="#d6d6d6" />
            <path d="M9 313l4 5 4-5M13 318v5M64 371l8 9M72 371l-8 9" stroke="#c8c8c8" />
          </Drawing>
          <TabRow>
            {["first", "prev", "next", "last"].map((name) => (
              <TabNav key={name} aria-label={name}>
                <Icon name={name} size={8} />
              </TabNav>
            ))}
            <Tabs>
              {["模型", "布局1", "布局2"].map((name) => (
                <LayoutTab key={name} active={tab === name ? 1 : undefined} onClick={() => setTab(name)}>
                  {name}
                </LayoutTab>
              ))}
            </Tabs>
          </TabRow>
        </Workspace>
        <SideDock right={1}>
          <SideBar height="285px">
            <SideGrip />
            <SideTools>
              <Tools names={modifyTools} side />
            </SideTools>
          </SideBar>
          <SideBar height="76px">
            <SideGrip />
            <SideTools>
              <Tools names={orderTools} side />
            </SideTools>
          </SideBar>
        </SideDock>
      </Main>

      <CommandDock>
        <CommandGrip />
        <CommandPane>
          <CommandLine divided={1}>命令:</CommandLine>
          <CommandLine>
            <label htmlFor="command">命令:</label>
            <CommandInput id="command" />
          </CommandLine>
        </CommandPane>
      </CommandDock>
      <StatusBar />

      <BackWindowEdge />
      <ContextMenu role="menu">
        <ContextItem role="menuitem">
          ACAD <Icon name="chevronRight" size={6} />
        </ContextItem>
        <ContextItem role="menuitem">
          CUSTOM <Icon name="chevronRight" size={6} />
        </ContextItem>
        <ContextRule />
        <ContextItem role="menuitem">
          锁定位置(K) <Icon name="chevronRight" size={6} />
        </ContextItem>
        <ContextItem role="menuitem" selected={1}>
          自定义(C)...
        </ContextItem>
      </ContextMenu>
      <Annotation width="180" height="92" fill="none" aria-hidden="true">
        <ellipse cx="117" cy="20" rx="56" ry="14" stroke="#cf4245" strokeWidth="2" />
        <path d="M5 87l43-42-5-3 18-7-2 17-4-3z" fill="#ee3f3c" stroke="#d93331" />
      </Annotation>
      <FloatingMeter />
      <Watermark>
        <WatermarkName>Ba</WatermarkName>
        <WatermarkSub>jing</WatermarkSub>
      </Watermark>
      <Paw width="32" height="18" aria-hidden="true">
        <ellipse cx="7" cy="10" rx="6" ry="10" fill="#b9b9b9" />
        <ellipse cx="23" cy="11" rx="6" ry="10" fill="#b9b9b9" />
      </Paw>
      <Brand>
        <Deer />
        <div>
          <BrandName>
            <BrandPrefix>3D</BrandPrefix>溜溜网
          </BrandName>
          <BrandSite>3D66.COM</BrandSite>
        </div>
      </Brand>
    </Window>
  );
}
